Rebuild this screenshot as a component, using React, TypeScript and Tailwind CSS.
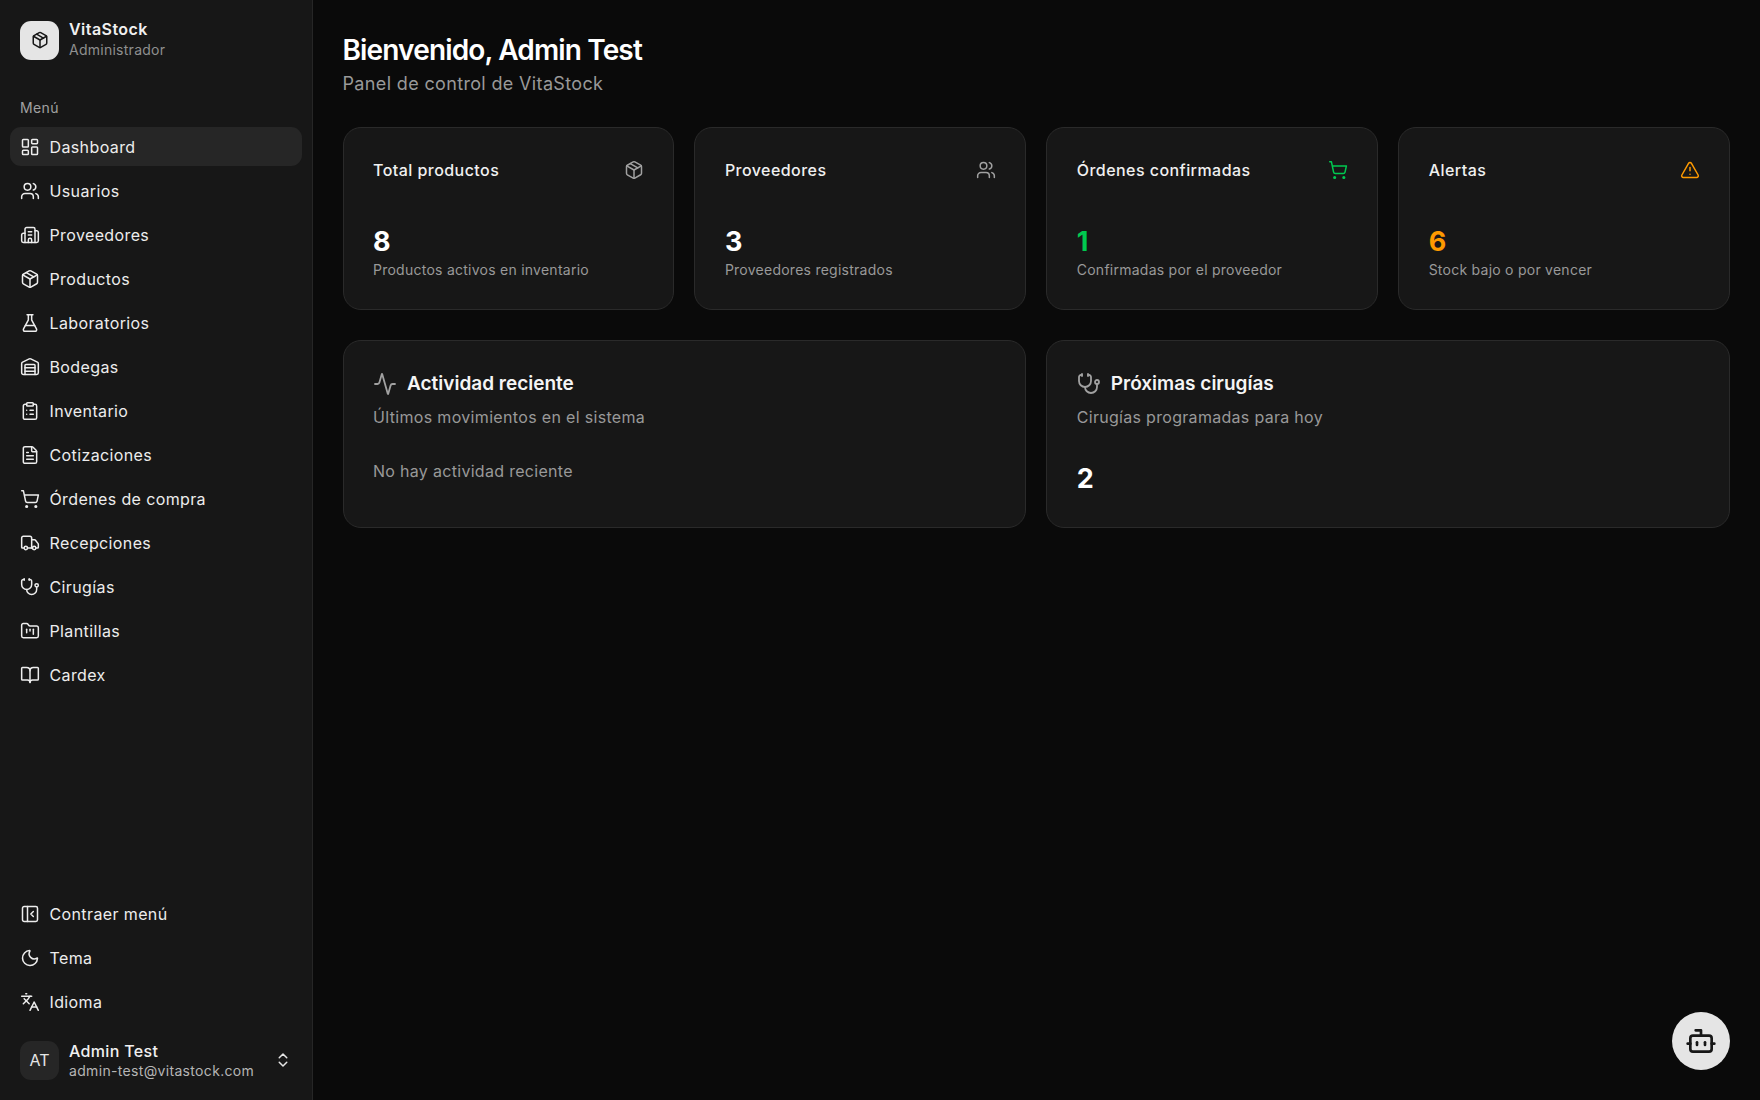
import React from "react";
import {
  LayoutDashboard, Users, Building2, Package, FlaskConical, Warehouse, ClipboardList, FileText,
  ShoppingCart, Truck, Stethoscope, FolderKanban, BookOpen, PanelLeftClose, Moon, Languages,
  ChevronsUpDown, Bot, Activity, TriangleAlert,
} from "lucide-react";

const nav = [
  { label: "Dashboard", icon: LayoutDashboard, active: true },
  { label: "Usuarios", icon: Users },
  { label: "Proveedores", icon: Building2 },
  { label: "Productos", icon: Package },
  { label: "Laboratorios", icon: FlaskConical },
  { label: "Bodegas", icon: Warehouse },
  { label: "Inventario", icon: ClipboardList },
  { label: "Cotizaciones", icon: FileText },
  { label: "Órdenes de compra", icon: ShoppingCart },
  { label: "Recepciones", icon: Truck },
  { label: "Cirugías", icon: Stethoscope },
  { label: "Plantillas", icon: FolderKanban },
  { label: "Cardex", icon: BookOpen },
];
const bottom = [
  { label: "Contraer menú", icon: PanelLeftClose },
  { label: "Tema", icon: Moon },
  { label: "Idioma", icon: Languages },
];

function Item({ label, icon: Icon, active }: { label: string; icon: React.ComponentType<any>; active?: boolean }) {
  return (
    <div className={`flex h-[39px] items-center gap-[9.5px] rounded-[11px] pl-[10px] text-[16px] tracking-[0.38px] text-[#ededed] ${active ? "bg-[#262626]" : ""}`}>
      <Icon size={20} strokeWidth={1.8} className="shrink-0" />
      <span>{label}</span>
    </div>
  );
}

const stats = [
  { title: "Total productos", value: "8", sub: "Productos activos en inventario", icon: Package, color: "text-[#a1a1a1]", valueColor: "text-white" },
  { title: "Proveedores", value: "3", sub: "Proveedores registrados", icon: Users, color: "text-[#a1a1a1]", valueColor: "text-white" },
  { title: "Órdenes confirmadas", value: "1", sub: "Confirmadas por el proveedor", icon: ShoppingCart, color: "text-[#00c950]", valueColor: "text-[#00c950]" },
  { title: "Alertas", value: "6", sub: "Stock bajo o por vencer", icon: TriangleAlert, color: "text-[#fe9a00]", valueColor: "text-[#fe9a00]" },
];

export default function App() {
  return (
    <div className="flex h-[1100px] w-full overflow-hidden bg-[#0a0a0a] text-white [font-family:Inter,'Noto_Sans',sans-serif]">
      <aside className="flex h-full w-[312.5px] shrink-0 flex-col border-r border-[#262626] bg-[#171717]">
        <div className="flex items-center gap-[10px] pl-[20px] pt-[20px]">
          <div className="flex h-[39px] w-[39px] items-center justify-center rounded-[11px] bg-[#e5e5e5] text-[#171717]">
            <Package size={18} strokeWidth={2} />
          </div>
          <div className="flex flex-col">
            <span className="text-[16px] font-semibold leading-[18px] tracking-[0.45px] text-[#f0f0f0]">VitaStock</span>
            <span className="mt-[2px] text-[14px] leading-[20px] tracking-[0.26px] text-[#8f8f8f]">Administrador</span>
          </div>
        </div>
        <div className="pl-[20px] pt-[38px] text-[14px] leading-[20px] tracking-[0.4px] text-[#a1a1a1]">Menú</div>
        <nav className="mt-[9px] flex flex-col gap-[5px] px-[10px]">
          {nav.map((n) => (
            <Item key={n.label} {...n} />
          ))}
        </nav>
        <div className="mt-auto flex flex-col gap-[5px] px-[10px]">
          {bottom.map((n) => (
            <Item key={n.label} {...n} />
          ))}
        </div>
        <div className="mt-[18px] flex items-center gap-[10px] pb-[19px] pl-[20px] pr-[20px]">
          <div className="flex h-[39px] w-[39px] items-center justify-center rounded-[11px] bg-[#262626] text-[16px] text-[#e5e5e5]">AT</div>
          <div className="flex min-w-0 flex-1 flex-col pt-[2px]">
            <span className="text-[16px] font-[450] leading-[20px] tracking-[0.33px] text-[#f0f0f0]">Admin Test</span>
            <span className="text-[14px] leading-[20px] tracking-[0.33px] text-[#b5b5b5]">admin-test@vitastock.com</span>
          </div>
          <ChevronsUpDown size={18} strokeWidth={2} className="text-[#e5e5e5]" />
        </div>
      </aside>

      <main className="min-w-0 flex-1 px-[30px] pt-[32px]">
        <h1 className="text-[28px] font-semibold leading-[36px] tracking-[-0.85px] text-white">Bienvenido, Admin Test</h1>
        <p className="mt-[3px] text-[18px] leading-[26px] tracking-[0.35px] text-[#999999]">Panel de control de VitaStock</p>

        <div className="mt-[30px] grid grid-cols-4 gap-[20px]">
          {stats.map((s) => (
            <div key={s.title} className="flex h-[183px] flex-col rounded-[18px] border border-[#2a2a2a] bg-[#171717] pl-[29.5px] pr-[29px] pt-[30px]">
              <div className="flex items-center justify-between">
                <span className="text-[16px] font-[450] leading-[24px] tracking-[0.45px] text-[#f0f0f0]">{s.title}</span>
                <s.icon size={20} strokeWidth={1.8} className={s.color} />
              </div>
              <div className={`mt-[42px] text-[27px] font-bold leading-[36px] ${s.valueColor}`}>{s.value}</div>
              <div className="text-[14px] leading-[20px] tracking-[0.25px] text-[#999999]">{s.sub}</div>
            </div>
          ))}
        </div>

        <div className="mt-[30px] grid grid-cols-2 gap-[20px]">
          <div className="h-[188px] rounded-[18px] border border-[#2a2a2a] bg-[#171717] px-[29.5px] pt-[29px]">
            <div className="flex items-center gap-[10px]">
              <Activity size={24} strokeWidth={1.8} className="text-[#a1a1a1]" />
              <span className="text-[19px] font-semibold leading-[28px] text-[#f5f5f5]">Actividad reciente</span>
            </div>
            <p className="mt-[7px] text-[16px] leading-[24px] tracking-[0.33px] text-[#999999]">Últimos movimientos en el sistema</p>
            <p className="mt-[30px] text-[16px] leading-[24px] tracking-[0.3px] text-[#999999]">No hay actividad reciente</p>
          </div>
          <div className="h-[188px] rounded-[18px] border border-[#2a2a2a] bg-[#171717] px-[29.5px] pt-[29px]">
            <div className="flex items-center gap-[10px]">
              <Stethoscope size={24} strokeWidth={1.8} className="text-[#a1a1a1]" />
              <span className="text-[19px] font-semibold leading-[28px] text-[#f5f5f5]">Próximas cirugías</span>
            </div>
            <p className="mt-[7px] text-[16px] leading-[24px] tracking-[0.3px] text-[#999999]">Cirugías programadas para hoy</p>
            <div className="mt-[32px] text-[27px] font-bold leading-[36px] text-white">2</div>
          </div>
        </div>
      </main>

      <div className="fixed bottom-[30px] right-[30px] flex h-[58px] w-[58px] items-center justify-center rounded-full bg-[#e5e5e5] text-[#171717]">
        <Bot size={32} strokeWidth={2} />
      </div>
    </div>
  );
}
